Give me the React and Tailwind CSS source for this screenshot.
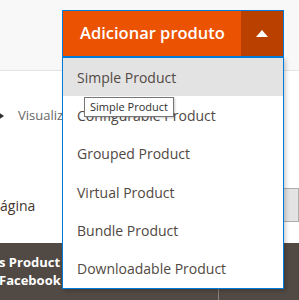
export default function App() {
  const items = [
    "Simple Product",
    "Configurable Product",
    "Grouped Product",
    "Virtual Product",
    "Bundle Product",
    "Downloadable Product",
  ];

  return (
    <div className="relative w-[299px] h-[300px] overflow-hidden bg-white font-['Open_Sans',sans-serif]">
      {/* page header */}
      <div className="h-[71px] bg-[#f8f8f8] border-b border-[#e3e3e3]"></div>

      {/* page content */}
      <div className="flex items-center h-[28px] mt-[31px]">
        <span className="block w-0 h-0 border-y-[4px] border-y-transparent border-l-[6px] border-l-[#303030] -ml-[2px]"></span>
        <span className="ml-[14px] text-[13px] text-[#666666]">Visualizar como</span>
      </div>

      <div className="flex items-center justify-between h-[34px] mt-[58px]">
        <span className="text-[14px] text-[#41362f]">ágina</span>
        <div className="w-[70px] h-[34px] bg-[#e3e3e3] border border-[#adadad]"></div>
      </div>

      {/* grid header */}
      <div className="flex h-[57px] mt-[21px] bg-[#514943]">
        <div className="w-[220px] pt-[10px] -ml-[1px] text-[13px] leading-[18px] font-bold text-white border-r border-[#8a837f]">
          <div>s Product Catalog</div>
          <div>Facebook Integration</div>
        </div>
        <div className="flex-1"></div>
      </div>

      {/* split button with open menu */}
      <div className="absolute left-[62px] top-[10px] w-[222px]">
        <div className="flex h-[47px] border border-[#007bdb]">
          <button className="flex-1 bg-[#eb5202] text-left pl-[17px] text-[16.5px] font-semibold text-white">
            Adicionar produto
          </button>
          <div className="w-[42px] bg-[#ba4000] flex items-center justify-center">
            <span className="block w-0 h-0 border-x-[6px] border-x-transparent border-b-[7px] border-b-white"></span>
          </div>
        </div>
        <ul className="border border-[#007bdb] bg-white shadow-[2px_2px_4px_rgba(0,0,0,0.2)]">
          {items.map((item, i) => (
            <li
              key={item}
              className={
                "h-[38.33px] flex items-center pl-[14px] text-[14px] text-[#514943] " +
                (i === 0 ? "bg-[#e3e3e3]" : "")
              }
            >
              {item}
            </li>
          ))}
        </ul>
      </div>

      {/* tooltip */}
      <div className="absolute left-[84px] top-[97px] px-[5px] h-[20px] flex items-center bg-white border border-[#767676] text-[11px] text-[#303030] shadow-[1px_1px_2px_rgba(0,0,0,0.2)]">
        Simple Product
      </div>
    </div>
  );
}
